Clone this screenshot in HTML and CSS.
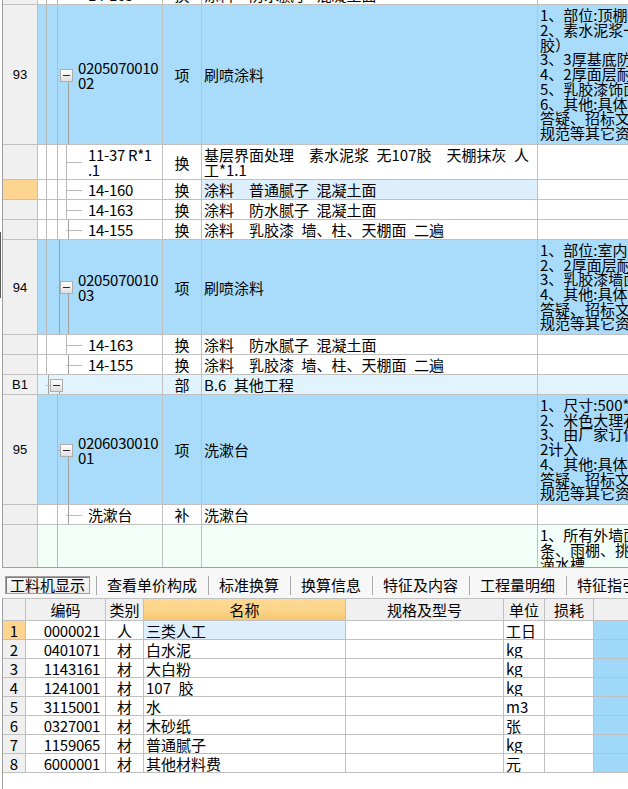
FILE: index.html
```html
<!DOCTYPE html>
<html lang="zh-CN">
<head>
<meta charset="utf-8">
<title>工料机</title>
<link rel="stylesheet" href="styles.css">
</head>
<body>
<div class="app">
  <div class="splitter"></div>
  <div class="top">
    <div class="row h20 first">
      <div class="rn"></div>
      <div class="tree kid"><i class="ln a"></i><i class="ln b"></i><span class="code">14-163</span></div>
      <div class="typ">换</div>
      <div class="nm">涂料&ensp;&ensp;防水腻子&ensp;混凝土面</div>
      <div class="ds"></div>
    </div>

    <div class="row h140 blue">
      <div class="rn">93</div>
      <div class="tree item"><i class="ln a"></i><i class="ln b"></i><i class="stub b"></i><i class="box item"></i><i class="ln c bot"></i><span class="code">0205070010<br>02</span></div>
      <div class="typ">项</div>
      <div class="nm">刷喷涂料</div>
      <div class="ds"><div class="txt">1、部位:顶棚、墙面<br>2、素水泥浆一遍（掺107<br>胶）<br>3、3厚基底防水腻子<br>4、2厚面层耐水腻子<br>5、乳胶漆饰面<br>6、其他:具体详见设计图纸、<br>答疑、招标文件及相关<br>规范等其它资料</div></div>
    </div>

    <div class="row h35">
      <div class="rn"></div>
      <div class="tree kid"><i class="ln a"></i><i class="ln b"></i><i class="ln c"></i><i class="stub c"></i><span class="code">11-37 R*1<br>.1</span></div>
      <div class="typ">换</div>
      <div class="nm"><span class="two">基层界面处理&ensp;&ensp;素水泥浆&ensp;无107胶&ensp;&ensp;天棚抹灰&ensp;人<br>工*1.1</span></div>
      <div class="ds"></div>
    </div>

    <div class="row h20">
      <div class="rn cur"></div>
      <div class="tree kid"><i class="ln a"></i><i class="ln b"></i><i class="ln c"></i><i class="stub c"></i><span class="code">14-160</span></div>
      <div class="typ">换</div>
      <div class="nm hl">涂料&ensp;&ensp;普通腻子&ensp;混凝土面</div>
      <div class="ds"></div>
    </div>

    <div class="row h20">
      <div class="rn"></div>
      <div class="tree kid"><i class="ln a"></i><i class="ln b"></i><i class="ln c"></i><i class="stub c"></i><span class="code">14-163</span></div>
      <div class="typ">换</div>
      <div class="nm">涂料&ensp;&ensp;防水腻子&ensp;混凝土面</div>
      <div class="ds"></div>
    </div>

    <div class="row h20">
      <div class="rn"></div>
      <div class="tree kid"><i class="ln a"></i><i class="ln b"></i><i class="ln c top"></i><i class="stub c"></i><span class="code">14-155</span></div>
      <div class="typ">换</div>
      <div class="nm">涂料&ensp;&ensp;乳胶漆&ensp;墙、柱、天棚面&ensp;二遍</div>
      <div class="ds"></div>
    </div>

    <div class="row h95 blue">
      <div class="rn">94</div>
      <div class="tree item"><i class="ln a"></i><i class="ln b top"></i><i class="stub b"></i><i class="box item"></i><i class="ln c bot"></i><span class="code">0205070010<br>03</span></div>
      <div class="typ">项</div>
      <div class="nm">刷喷涂料</div>
      <div class="ds"><div class="txt">1、部位:室内墙面<br>2、2厚面层耐水腻子<br>3、乳胶漆墙面<br>4、其他:具体详见设计图纸、<br>答疑、招标文件及相关<br>规范等其它资料</div></div>
    </div>

    <div class="row h20">
      <div class="rn"></div>
      <div class="tree kid"><i class="ln a"></i><i class="ln c"></i><i class="stub c"></i><span class="code">14-163</span></div>
      <div class="typ">换</div>
      <div class="nm">涂料&ensp;&ensp;防水腻子&ensp;混凝土面</div>
      <div class="ds"></div>
    </div>

    <div class="row h20">
      <div class="rn"></div>
      <div class="tree kid"><i class="ln a"></i><i class="ln c top"></i><i class="stub c"></i><span class="code">14-155</span></div>
      <div class="typ">换</div>
      <div class="nm">涂料&ensp;&ensp;乳胶漆&ensp;墙、柱、天棚面&ensp;二遍</div>
      <div class="ds"></div>
    </div>

    <div class="row h20 part">
      <div class="rn">B1</div>
      <div class="tree"><i class="ln a top"></i><i class="stub a"></i><i class="box part"></i><i class="ln b bot"></i></div>
      <div class="typ">部</div>
      <div class="nm">B.6&ensp;其他工程</div>
      <div class="ds"></div>
    </div>

    <div class="row h110 blue">
      <div class="rn">95</div>
      <div class="tree item"><i class="ln b"></i><i class="stub b"></i><i class="box item"></i><i class="ln c bot"></i><span class="code">0206030010<br>01</span></div>
      <div class="typ">项</div>
      <div class="nm">洗漱台</div>
      <div class="ds"><div class="txt">1、尺寸:500*600<br>2、米色大理石台面<br>3、由厂家订做，<br>2计入<br>4、其他:具体详见设计图纸、<br>答疑、招标文件及相关<br>规范等其它资料</div></div>
    </div>

    <div class="row h20">
      <div class="rn"></div>
      <div class="tree kid"><i class="ln b"></i><i class="ln c top"></i><i class="stub c"></i><span class="code">洗漱台</span></div>
      <div class="typ">补</div>
      <div class="nm">洗漱台</div>
      <div class="ds"></div>
    </div>

    <div class="row h110 mint">
      <div class="rn"></div>
      <div class="tree item"><i class="ln b"></i><span class="code">0206040010<br>01</span></div>
      <div class="typ">项</div>
      <div class="nm">装饰线条</div>
      <div class="ds"><div class="txt">1、所有外墙面线<br>条、雨棚、挑檐均做<br>滴水槽<br>2、其他:具体详见<br>设计图纸、答疑<br>招标文件及相关<br>规范等其它资料</div></div>
    </div>
  </div>

  <div class="tabs">
    <span class="tab on">工料机显示</span><span class="sep"></span>
    <span class="tab">查看单价构成</span><span class="sep"></span>
    <span class="tab">标准换算</span><span class="sep"></span>
    <span class="tab">换算信息</span><span class="sep"></span>
    <span class="tab">特征及内容</span><span class="sep"></span>
    <span class="tab">工程量明细</span><span class="sep"></span>
    <span class="tab">特征指引</span>
  </div>

  <div class="bot">
    <div class="brow head">
      <div class="bn"></div><div>编码</div><div>类别</div><div class="sel">名称</div><div>规格及型号</div><div>单位</div><div>损耗</div><div></div>
    </div>
    <div class="brow">
      <div class="bn cur">1</div><div class="cd">0000021</div><div class="ct">人</div><div class="bnm hl">三类人工</div><div></div><div class="un">工日</div><div></div><div class="ex"></div>
    </div>
    <div class="brow">
      <div class="bn">2</div><div class="cd">0401071</div><div class="ct">材</div><div class="bnm">白水泥</div><div></div><div class="un">kg</div><div></div><div class="ex"></div>
    </div>
    <div class="brow">
      <div class="bn">3</div><div class="cd">1143161</div><div class="ct">材</div><div class="bnm">大白粉</div><div></div><div class="un">kg</div><div></div><div class="ex"></div>
    </div>
    <div class="brow">
      <div class="bn">4</div><div class="cd">1241001</div><div class="ct">材</div><div class="bnm">107&ensp;胶</div><div></div><div class="un">kg</div><div></div><div class="ex"></div>
    </div>
    <div class="brow">
      <div class="bn">5</div><div class="cd">3115001</div><div class="ct">材</div><div class="bnm">水</div><div></div><div class="un">m3</div><div></div><div class="ex"></div>
    </div>
    <div class="brow">
      <div class="bn">6</div><div class="cd">0327001</div><div class="ct">材</div><div class="bnm">木砂纸</div><div></div><div class="un">张</div><div></div><div class="ex"></div>
    </div>
    <div class="brow">
      <div class="bn">7</div><div class="cd">1159065</div><div class="ct">材</div><div class="bnm">普通腻子</div><div></div><div class="un">kg</div><div></div><div class="ex"></div>
    </div>
    <div class="brow">
      <div class="bn">8</div><div class="cd">6000001</div><div class="ct">材</div><div class="bnm">其他材料费</div><div></div><div class="un">元</div><div></div><div class="ex"></div>
    </div>
  </div>
</div>
</body>
</html>
```

FILE: styles.css
```css
* { box-sizing: border-box; }
html, body {
  margin: 0;
  padding: 0;
  background: #ffffff;
  overflow: hidden;
}
body {
  font-family: "Noto Sans CJK SC", "Liberation Sans", sans-serif;
  font-size: 15px;
  color: #000;
  width: 628px;
  height: 789px;
}
.app {
  position: relative;
  width: 628px;
  height: 789px;
  overflow: hidden;
}
.splitter {
  position: absolute;
  left: 0;
  top: 232px;
  width: 1px;
  height: 66px;
  background: #5a5a5a;
  z-index: 3;
}

/* ---------- top grid ---------- */
.top {
  margin-left: 2px;
  height: 568px;
  border-left: 1px solid #a0a0a0;
  border-bottom: 1px solid #a0a0a0;
  overflow: hidden;
}
.row {
  display: grid;
  grid-template-columns: 35px 125px 39px 336px 300px;
  border-bottom: 1px solid #c0c0c0;
  width: 835px;
}
.row.first { margin-top: -15px; }
.h20 { height: 20px; }
.h35 { height: 35px; }
.h95 { height: 95px; }
.h110 { height: 110px; }
.h140 { height: 140px; }

.row > div {
  display: flex;
  align-items: center;
  border-right: 1px solid #c0c0c0;
  overflow: hidden;
  white-space: nowrap;
  line-height: 15px;
}
.rn {
  justify-content: center;
  background: #f0f0f0;
  font-family: "Liberation Sans", sans-serif;
  font-size: 13px;
}
.tree { position: relative; }
.tree.item { padding-left: 40px; }
.tree.kid { padding-left: 50px; }
.code { display: block; line-height: 15px; letter-spacing: -0.3px; }
.typ { justify-content: center; }
.nm { padding-left: 2px; }
.row > div.nm.hl { background: #ddeefc; }
.ds { padding-left: 2px; }
.ds .txt { line-height: 14.67px; }
.two { display: block; line-height: 15px; }

.blue > div { background: #a9dcfa; }
.part > div { background: #e1f4fd; }
.mint > div { background: #f2fff9; }
.row > div.rn { background: #f0f0f0; }
.row > div.rn.cur { background: #fdd590; }

/* tree connectors */
.ln {
  position: absolute;
  top: 0;
  bottom: 0;
  width: 1px;
  background: #b9b9b9;
}
.ln.a { left: 8px; }
.ln.b { left: 19px; }
.ln.c { left: 28px; }
.ln.top { bottom: 50%; }
.ln.bot { top: 50%; }
.stub {
  position: absolute;
  top: 50%;
  height: 1px;
  background: #b9b9b9;
}
.stub.a { left: 8px; width: 5px; }
.stub.b { left: 19px; width: 4px; }
.stub.c { left: 28px; width: 16px; }
.box {
  position: absolute;
  top: 50%;
  margin-top: -6px;
  width: 13px;
  height: 13px;
  border: 1px solid #acacac;
  background: linear-gradient(#ffffff, #dedede);
  z-index: 1;
}
.box.item { left: 22px; }
.box.part { left: 12px; }
.box::after {
  content: "";
  position: absolute;
  left: 2px;
  top: 5px;
  width: 7px;
  height: 1px;
  background: #2a2a2a;
}

/* ---------- tabs ---------- */
.tabs {
  display: flex;
  align-items: flex-start;
  height: 30px;
  padding-top: 8px;
  padding-left: 5px;
  background: #f7f7f7;
  white-space: nowrap;
}
.tab {
  display: block;
  height: 18px;
  line-height: 16px;
  padding: 0 4px;
  border: 1px solid transparent;
  flex: none;
}
.tab.on {
  border: 1px solid #a0a0a0;
  box-shadow: inset 1px 1px 0 #7c7c7c;
  background: linear-gradient(#fbfbfb, #ececec);
}
.sep {
  display: block;
  width: 1px;
  height: 19px;
  margin: 0 5px 0 6px;
  background: #a8a8a8;
  flex: none;
}

/* ---------- bottom grid ---------- */
.bot {
  margin-left: 2px;
  height: 191px;
  border-left: 1px solid #a0a0a0;
  overflow: hidden;
}
.brow {
  display: grid;
  grid-template-columns: 23px 80px 38px 202px 158px 41px 49px 40px;
  height: 19px;
  border-bottom: 1px solid #c0c0c0;
  width: 631px;
}
.brow > div {
  display: flex;
  align-items: center;
  border-right: 1px solid #c0c0c0;
  overflow: hidden;
  white-space: nowrap;
  line-height: 15px;
}
.brow.head {
  height: 23px;
  border-top: 1px solid #c0c0c0;
}
.brow.head > div {
  justify-content: center;
  background: #f0f0f0;
}
.brow.head > div.sel {
  background: linear-gradient(#fdd994 0%, #fcd58b 50%, #f5c66f 100%);
}
.bn {
  justify-content: center;
  background: #f0f0f0;
}
.brow > div.bn.cur { background: #fdd590; }
.cd { justify-content: flex-end; padding-right: 5px; letter-spacing: -0.3px; }
.ct { justify-content: center; }
.bnm { padding-left: 2px; }
.brow > div.bnm.hl { background: #ddeefc; }
.un { padding-left: 2px; }
.brow > div.ex { background: #a0d8f9; border-right: none; }
```
